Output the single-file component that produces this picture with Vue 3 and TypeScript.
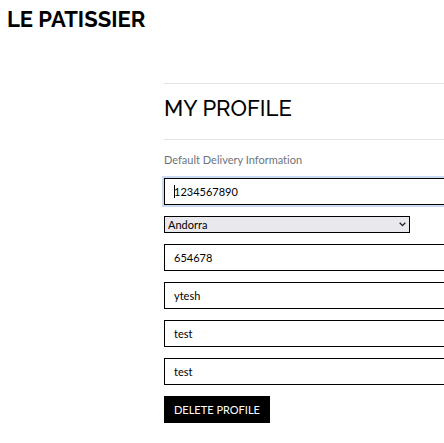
<script setup lang="ts">
import { ref } from 'vue'

interface Field {
  id: string
  label: string
  value: string
}

const phone = ref('1234567890')
const country = ref('Andorra')
const fields = ref<Field[]>([
  { id: 'postcode', label: 'Postal code', value: '654678' },
  { id: 'town', label: 'Town or city', value: 'ytesh' },
  { id: 'street1', label: 'Street address 1', value: 'test' },
  { id: 'street2', label: 'Street address 2', value: 'test' },
])
</script>

<template>
  <div class="page">
    <header class="site-header">
      <a class="brand" href="#">LE PATISSIER</a>
    </header>
    <main class="profile">
      <div class="title-row">
        <h1>MY PROFILE</h1>
      </div>
      <p class="lead">Default Delivery Information</p>
      <form class="form" @submit.prevent>
        <div class="active-field">
          <input v-model="phone" class="control active" type="text" aria-label="Phone number" />
          <span class="caret" aria-hidden="true"></span>
        </div>
        <div class="select-wrap">
          <select v-model="country" aria-label="Country">
            <option>Andorra</option>
          </select>
          <svg class="chevron" viewBox="0 0 7 5" aria-hidden="true">
            <path d="M0.7 0.8 L3.5 3.6 L6.3 0.8" fill="none" stroke="#222" stroke-width="1.3" />
          </svg>
        </div>
        <input
          v-for="field in fields"
          :key="field.id"
          v-model="field.value"
          class="control"
          type="text"
          :aria-label="field.label"
        />
        <button class="delete" type="button">DELETE PROFILE</button>
      </form>
    </main>
  </div>
</template>

<style>
body {
  background: #fff;
}
</style>

<style scoped>
.page {
  overflow-x: hidden;
  padding-bottom: 20px;
  color: #000;
  font-family: Lato, "Liberation Sans", sans-serif;
  font-size: 11px;
  font-variant-ligatures: none;
}

.site-header {
  padding: 6px 7px 0;
  height: 77px;
}

.brand {
  color: #000;
  font-family: Raleway, Lato, sans-serif;
  font-size: 22px;
  font-weight: 700;
  line-height: 26px;
  text-decoration: none;
}

.profile {
  margin: 0 -16px 0 164px;
}

.title-row {
  padding: 11px 0 17px;
  border-top: 1px solid #e3e3e3;
  border-bottom: 1px solid #e3e3e3;
}

h1 {
  margin: 0;
  font-family: Raleway, Lato, sans-serif;
  font-size: 22px;
  font-weight: 500;
  line-height: 27px;
}

.lead {
  margin: 11px 0 9px;
  color: #6c757d;
  line-height: 18px;
}

.form {
  display: flex;
  flex-direction: column;
  align-items: flex-start;
  gap: 11px;
}

.active-field {
  position: relative;
  width: 100%;
}

.control {
  display: block;
  box-sizing: border-box;
  width: 100%;
  height: 27px;
  padding: 0 9px;
  border: 1px solid #000;
  border-radius: 0;
  outline: none;
  background: #fff;
  color: #000;
  font: inherit;
}

.active {
  box-shadow: 0 0 0 2px #c9daf3;
  caret-color: transparent;
}

.caret {
  position: absolute;
  top: 7px;
  left: 10px;
  width: 1px;
  height: 13px;
  background: #000;
}

.select-wrap {
  position: relative;
  width: 246px;
  height: 17px;
}

select {
  display: block;
  box-sizing: border-box;
  width: 100%;
  height: 17px;
  padding: 0 20px 0 3px;
  border: 1px solid #000;
  border-radius: 0;
  appearance: none;
  background: #e9e9ed;
  color: #000;
  font: inherit;
  line-height: 15px;
}

.chevron {
  position: absolute;
  top: 6px;
  right: 4px;
  width: 7px;
  height: 5px;
  pointer-events: none;
}

.delete {
  height: 27px;
  padding: 0 10px;
  border: 0;
  background: #000;
  color: #fff;
  font: inherit;
}
</style>
